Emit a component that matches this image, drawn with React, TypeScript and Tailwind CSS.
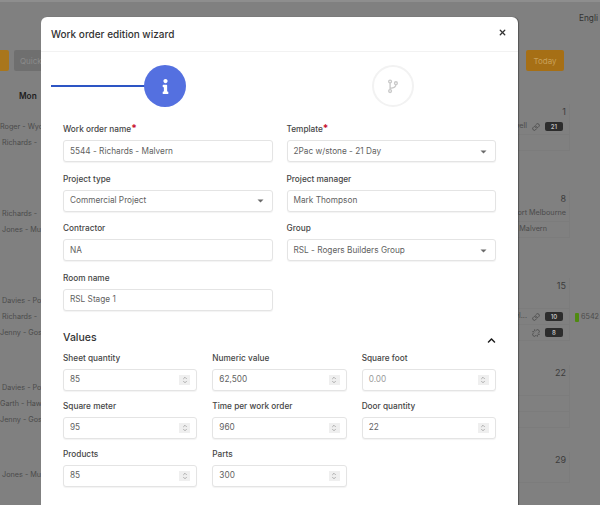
import { ChevronDown, ChevronUp, Link, Unlink, X } from "lucide-react"
import { FaChevronUp, FaInfo } from "react-icons/fa"

type CalEvent = {
  left: string
  tail?: string
  tailPad?: string
  icon?: "link" | "unlink"
  badge?: string
  next?: boolean
}

const weeks: { day: string; events: CalEvent[] }[] = [
  {
    day: "1",
    events: [
      { left: "Roger - Wyc", tail: "Stawell", icon: "link", badge: "21" },
      { left: " Richards -" },
    ],
  },
  {
    day: "8",
    events: [
      { left: " Richards -", tail: "Port Melbourne", tailPad: "pr-[3px]" },
      { left: " Jones - Mu", tail: "- Malvern", tailPad: "pr-[22px]" },
    ],
  },
  {
    day: "15",
    events: [
      { left: " Davies - Po" },
      { left: " Richards -", tail: "Newl...", icon: "link", badge: "10", next: true },
      { left: "Jenny - Gos", icon: "unlink", badge: "8" },
    ],
  },
  {
    day: "22",
    events: [
      { left: " Davies - Po" },
      { left: "Garth - Haw" },
      { left: "Jenny - Gos" },
    ],
  },
  {
    day: "29",
    events: [{ left: " Jones - Mu" }],
  },
]

function Week({ day, events }: { day: string; events: CalEvent[] }) {
  return (
    <div className="h-[87px]">
      <div className="flex h-[15px] justify-end pr-[30px]">
        <div className="w-[52px] border-r border-[#7c7c7c] pr-[3px] text-right text-[9px] leading-[15px] text-[#3c3c3c]">
          {day}
        </div>
      </div>
      {events.map((e, i) => (
        <div key={i} className="flex h-4 items-center text-[7.25px] text-[#4b4b4b]">
          <div className="w-[41px] overflow-hidden whitespace-pre">{e.left}</div>
          <div className="flex-1" />
          <div className={`flex h-4 w-[52px] items-center justify-end gap-[5px] whitespace-nowrap border-b border-r border-[#7c7c7c] ${e.tailPad ?? "pr-[6px]"}`}>
            {e.tail && <span className="shrink-0">{e.tail}</span>}
            {e.icon === "link" && <Link size={8} className="shrink-0 text-[#3c3c3c]" />}
            {e.icon === "unlink" && <Unlink size={8} className="shrink-0 text-[#3c3c3c]" />}
            {e.badge && (
              <span className="flex h-[9px] w-[18px] shrink-0 items-center justify-center rounded-[2px] bg-[#2c2c2c] text-[6px] font-semibold text-[#bdbdbd]">
                {e.badge}
              </span>
            )}
          </div>
          <div className="flex w-[30px] items-center gap-[2px] pl-[5px]">
            {e.next && (
              <>
                <span className="h-[9px] w-1 rounded-[1px] bg-[#4f8a10]" />
                <span>6542</span>
              </>
            )}
          </div>
        </div>
      ))}
    </div>
  )
}

function Label({ text, required }: { text: string; required?: boolean }) {
  return (
    <div className="mb-1 h-[14px] text-[8.25px] font-medium leading-[14px] text-[#454545]">
      {text}
      {required && <span className="text-[10px] font-bold leading-none text-[#c8102e]">*</span>}
    </div>
  )
}

function Field({ label, value, required, select }: { label: string; value: string; required?: boolean; select?: boolean }) {
  return (
    <div>
      <Label text={label} required={required} />
      <div className="flex h-[22px] items-center justify-between rounded-[3px] border border-[#e4e4e4] bg-white pl-[6px] pr-[8px] text-[8.25px] text-[#5f5f5f] shadow-[0_1px_1px_rgba(0,0,0,0.05)]">
        <span>{value}</span>
        {select && (
          <svg width="7" height="4" viewBox="0 0 7 4" className="mt-[1px]">
            <path d="M0.5 0.5h6L3.5 3.5z" fill="#6b6b6b" />
          </svg>
        )}
      </div>
    </div>
  )
}

function NumberField({ label, value, muted }: { label: string; value: string; muted?: boolean }) {
  return (
    <div>
      <Label text={label} />
      <div className="flex h-[22px] items-center justify-between rounded-[3px] border border-[#e4e4e4] bg-white pl-[6px] pr-[6px] text-[8.25px] shadow-[0_1px_1px_rgba(0,0,0,0.05)]">
        <span className={muted ? "text-[#9a9a9a]" : "text-[#5f5f5f]"}>{value}</span>
        <div className="flex h-[10px] w-[11px] flex-col items-center justify-center bg-[#efefef] text-[#6f6f6f]">
          <ChevronUp size={6} strokeWidth={2} className="-mb-[1px]" />
          <ChevronDown size={6} strokeWidth={2} className="-mt-[1px]" />
        </div>
      </div>
    </div>
  )
}

export default function App() {
  return (
    <div className="relative h-[505px] w-[600px] overflow-hidden bg-[#808080] font-['Inter','Liberation_Sans',sans-serif]">
      <div className="flex h-[50px] items-start overflow-hidden border-t-2 border-[#8e8e8e] pl-[579px] pt-[10px]">
        <span className="text-[8.25px] text-[#333333]">Engli</span>
      </div>

      <div className="flex h-[21px] items-stretch justify-between text-[8px]">
        <div className="flex gap-[5px]">
          <div className="w-[9px] rounded-r-[2px] bg-[#a9761c]" />
          <div className="flex w-[28px] items-center overflow-hidden rounded-l-[2px] bg-[#6f6f6f] pl-[6px] text-[#8b8b8b]">Quick</div>
        </div>
        <div className="mr-[36px] flex w-[38px] items-center justify-center rounded-[2px] bg-[#a66f15] text-[#c9a15a]">Today</div>
      </div>

      <div className="h-[33px] pl-[19px] pt-[19px] text-[8.25px] font-semibold leading-[12px] text-[#1c1c1c]">Mon</div>

      {weeks.map((w) => (
        <Week key={w.day} day={w.day} events={w.events} />
      ))}

      <div className="absolute left-[41px] top-[17px] h-[520px] w-[477px] rounded-[6px] bg-white shadow-[1px_0_1px_rgba(0,0,0,0.35)]">
        <div className="flex h-[35px] items-center justify-between border-b border-[#f2f2f2] pl-[10px] pr-[11px]">
          <span className="mt-[1px] text-[10px] font-medium text-[#333333]">Work order edition wizard</span>
          <X size={9} strokeWidth={3.5} className="-mt-[4px] text-[#333333]" />
        </div>

        <div className="flex items-center pb-[15px] pl-[10px] pt-[13px]">
          <div className="h-[2px] w-[94px] bg-[#2d55c4]" />
          <div className="-ml-[1px] flex h-[42px] w-[42px] items-center justify-center rounded-full bg-[#5470e0] text-white">
            <FaInfo size={15} />
          </div>
          <div className="ml-[186px] flex h-[42px] w-[42px] items-center justify-center rounded-full border-2 border-[#f2f2f2]">
            <svg width="12" height="15" viewBox="0 0 14 18" fill="none" stroke="#c9c9c9" strokeWidth="1.6">
              <circle cx="3.5" cy="3" r="1.7" />
              <circle cx="3.5" cy="14.5" r="1.7" />
              <circle cx="10.5" cy="5" r="1.7" />
              <path d="M3.5 4.7v8.1M10.5 6.7c0 3-2 4.3-7 4.6" />
            </svg>
          </div>
        </div>

        <div className="px-[22px]">
          <div className="grid grid-cols-2 gap-x-[14px] gap-y-[9.5px]">
            <Field label="Work order name" value="5544 - Richards - Malvern" required />
            <Field label="Template" value="2Pac w/stone - 21 Day" required select />
            <Field label="Project type" value="Commercial Project" select />
            <Field label="Project manager" value="Mark Thompson" />
            <Field label="Contractor" value="NA" />
            <Field label="Group" value="RSL - Rogers Builders Group" select />
            <Field label="Room name" value="RSL Stage 1" />
          </div>

          <div className="mb-[6px] mt-[20px] flex h-[14px] items-center justify-between">
            <span className="text-[10.5px] font-medium text-[#333333]">Values</span>
            <FaChevronUp size={9} className="mt-[6px] text-[#1c1c1c]" />
          </div>

          <div className="grid grid-cols-3 gap-x-[15px] gap-y-2">
            <NumberField label="Sheet quantity" value="85" />
            <NumberField label="Numeric value" value="62,500" />
            <NumberField label="Square foot" value="0.00" muted />
            <NumberField label="Square meter" value="95" />
            <NumberField label="Time per work order" value="960" />
            <NumberField label="Door quantity" value="22" />
            <NumberField label="Products" value="85" />
            <NumberField label="Parts" value="300" />
          </div>
        </div>
      </div>
    </div>
  )
}
